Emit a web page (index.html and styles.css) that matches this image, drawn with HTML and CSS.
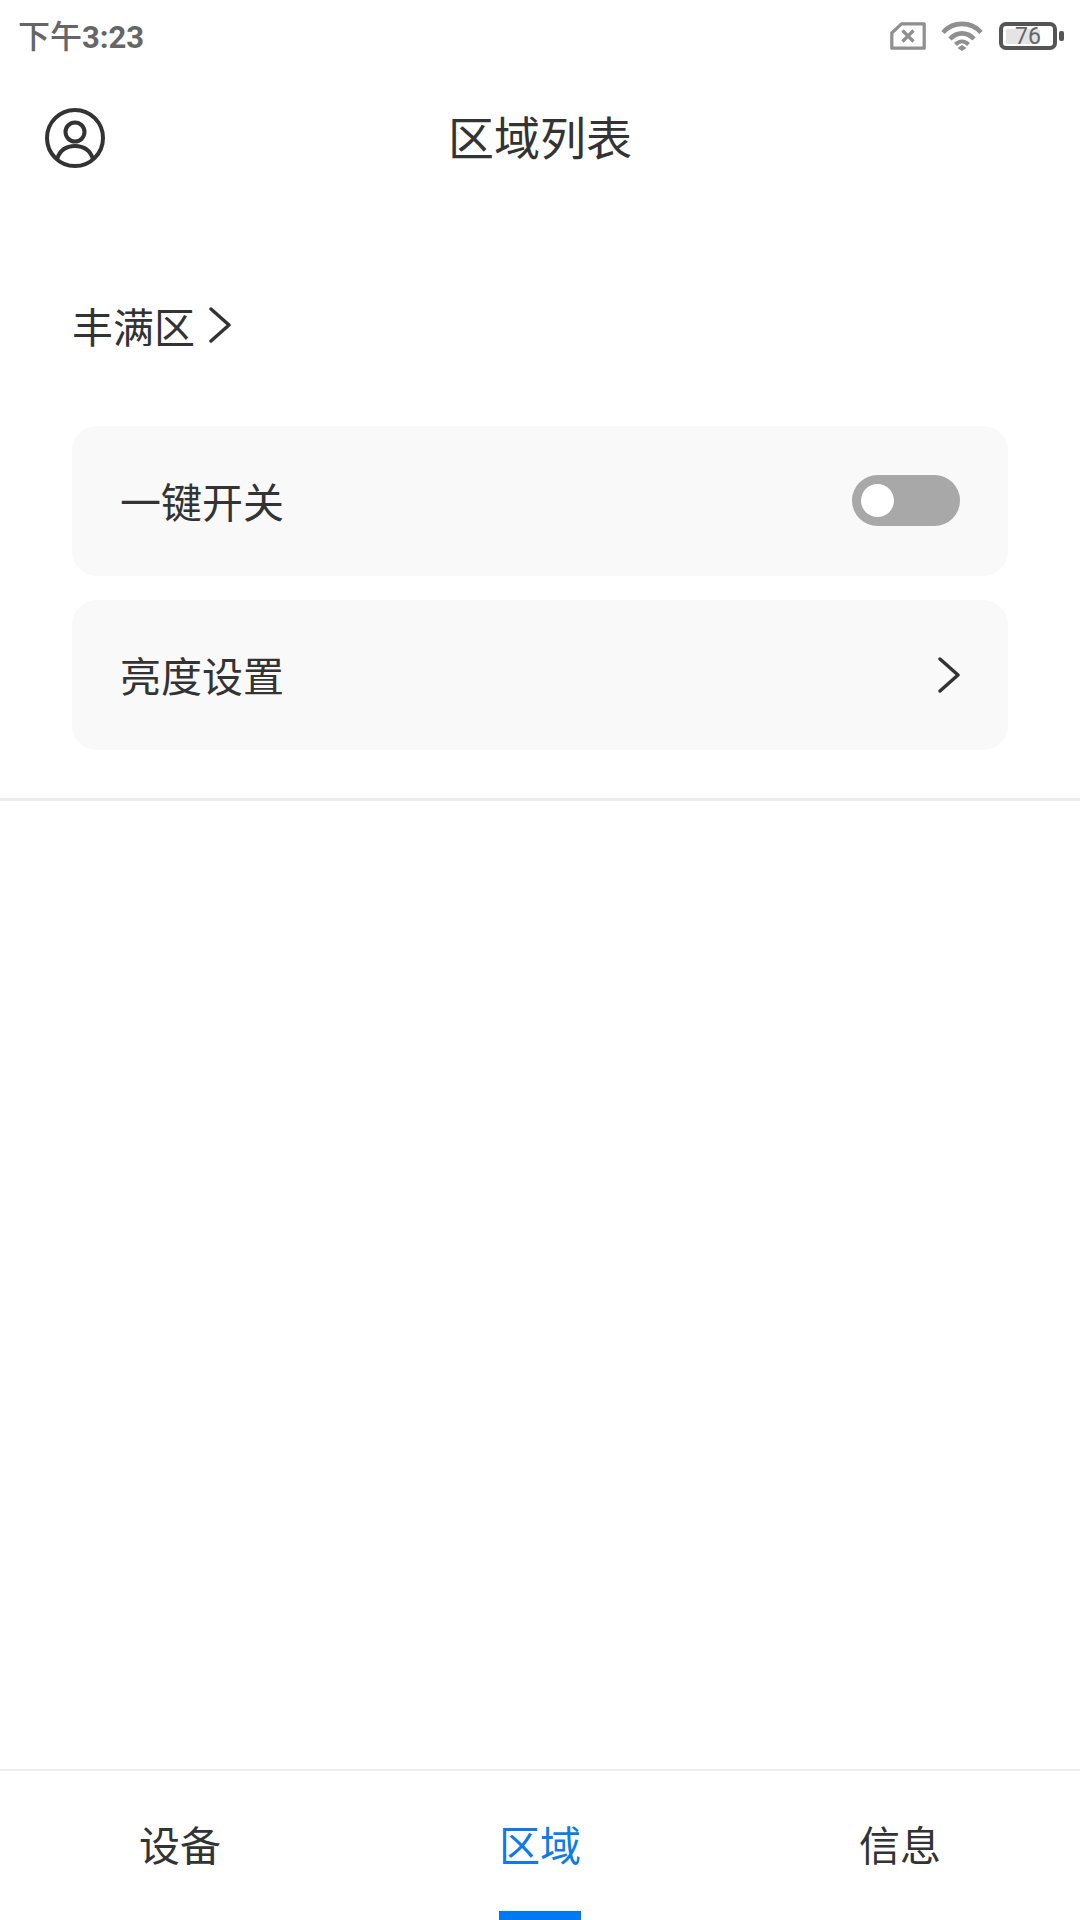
FILE: index.html
```html
<!DOCTYPE html>
<html lang="zh">
<head>
<meta charset="utf-8">
<title>区域列表</title>
<link rel="stylesheet" href="styles.css">
</head>
<body>
<div class="app">
  <div class="status">
    <span class="time">下午<b>3:23</b></span>
    <div class="status-icons">
      <svg class="sim" viewBox="0 0 36 28" width="36" height="28"><path d="M11.500 1.800H34.200V26.200H1.800V11Z" fill="none" stroke="#8f8f8f" stroke-width="3.200" stroke-linejoin="round"/><path d="M12.500 8.500L23.500 19.500M23.500 8.500L12.500 19.500" stroke="#8f8f8f" stroke-width="3.200" fill="none"/></svg>
      <svg class="wifi" viewBox="0 0 42 30" width="42" height="30"><path d="M2 11.500C12 0 30 0 40 11.500" fill="none" stroke="#8f8f8f" stroke-width="4.600"/><path d="M9 18C16 10.500 26 10.500 33 18" fill="none" stroke="#8f8f8f" stroke-width="4.600"/><path d="M14.500 23.500C18.500 19.500 23.500 19.500 27.500 23.500" fill="none" stroke="#8f8f8f" stroke-width="4"/><path d="M21 24L25.500 27L21 30L16.500 27Z" fill="#8f8f8f"/></svg>
      <div class="battery">
        <div class="battery-body"><div class="battery-fill"></div><span class="battery-num">76</span></div>
        <div class="battery-cap"></div>
      </div>
    </div>
  </div>
  <header class="header">
    <svg class="avatar" viewBox="0 0 60 60" width="60" height="60"><circle cx="30" cy="30" r="28" fill="none" stroke="#333" stroke-width="4"/><circle cx="30" cy="24" r="9.500" fill="none" stroke="#333" stroke-width="4"/><path d="M12 51C15 42 22 38 30 38C38 38 45 42 48 51" fill="none" stroke="#333" stroke-width="4"/></svg>
    <h1 class="title">区域列表</h1>
  </header>
  <section class="content">
    <div class="area"><span>丰满区</span>
      <svg viewBox="0 0 24 36" width="24" height="36"><path d="M3 2L21 18L3 34" fill="none" stroke="#333" stroke-width="3.400" stroke-linecap="round" stroke-linejoin="round"/></svg>
    </div>
    <div class="cards">
      <div class="card"><span class="card-label">一键开关</span><div class="toggle"><div class="knob"></div></div></div>
      <div class="card"><span class="card-label">亮度设置</span>
        <svg viewBox="0 0 22 36" width="22" height="36"><path d="M2 2L20 18L2 34" fill="none" stroke="#333" stroke-width="3.400" stroke-linecap="round" stroke-linejoin="round"/></svg>
      </div>
    </div>
  </section>
  <div class="spacer"></div>
  <nav class="tabs">
    <div class="tab">设备</div>
    <div class="tab active">区域</div>
    <div class="tab">信息</div>
  </nav>
</div>
</body>
</html>
```
FILE: styles.css
```css
* { box-sizing: border-box; }
html, body { margin: 0; padding: 0; background: #fff; }
body { font-family: "Noto Sans CJK SC", "Noto Sans", sans-serif; color: #333; }
.app { width: 1080px; height: 1920px; display: flex; flex-direction: column; overflow: hidden; }
.status { height: 72px; display: flex; align-items: center; justify-content: space-between; padding: 0 16px 0 18px; }
.time { font-size: 32px; line-height: 68px; height: 72px; color: #666; font-family: "Noto Sans CJK SC", sans-serif; font-weight: 500; }
.time b { font-family: Roboto, sans-serif; font-weight: 700; font-size: 31px; }
.status-icons { display: flex; align-items: center; gap: 16px; }
.sim { margin-left: 1px; margin-right: -1px; }
.battery { display: flex; align-items: center; gap: 2px; }
.battery-body { width: 58px; height: 28px; border: 4px solid #555; border-radius: 7px; position: relative; display: flex; align-items: center; justify-content: center; }
.battery-fill { position: absolute; left: 3px; top: 3px; bottom: 2px; width: 34px; background: #e4e4e4; border-radius: 2px; }
.battery-num { position: relative; font-size: 23px; font-family: Roboto, sans-serif; color: #666; line-height: 20px; padding-top: 1px; }
.battery-cap { width: 5px; height: 10px; background: #555; border-radius: 2px; }
.header { height: 134px; position: relative; display: flex; align-items: center; justify-content: center; }
.avatar { position: absolute; left: 45px; top: 36px; }
.title { margin: 0 0 8px; font-size: 46px; font-weight: 400; line-height: 60px; }
.content { padding: 0 72px; border-bottom: 3px solid #ececec; height: 595px; }
.area { display: flex; align-items: center; gap: 13px; height: 60px; margin-top: 89px; margin-bottom: 71px; font-size: 41px; }
.cards { display: flex; flex-direction: column; gap: 24px; }
.card { height: 150px; width: 936px; background: #f9f9f9; border-radius: 24px; display: flex; align-items: center; justify-content: space-between; padding: 0 48px; font-size: 41px; }
.card-label { margin-bottom: 3px; }
.toggle { width: 108px; height: 51px; border-radius: 26px; background: #a8a8a8; padding: 9px; margin-bottom: 1px; }
.knob { width: 33px; height: 33px; border-radius: 50%; background: #fff; }
.spacer { flex: 1; }
.tabs { height: 151px; border-top: 2px solid #eee; display: grid; grid-template-columns: repeat(3, 1fr); }
.tab { display: flex; align-items: flex-start; justify-content: center; padding-top: 44px; font-size: 41px; line-height: 56px; position: relative; }
.tab.active { color: #0d7be8; }
.tab.active::after { content: ""; position: absolute; bottom: 0; left: 139px; width: 82px; height: 9px; background: #0079f5; }
```
